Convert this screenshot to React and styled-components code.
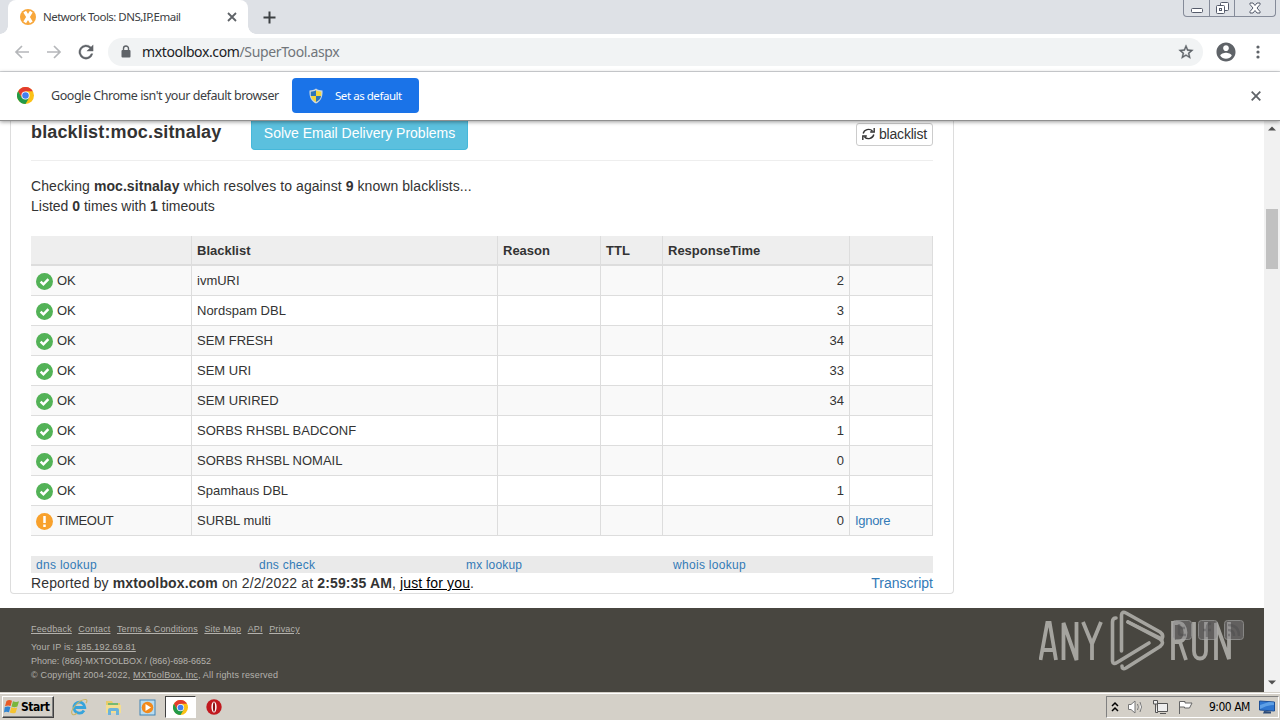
import React from "react";
import styled, { createGlobalStyle, css } from "styled-components";

const Global = createGlobalStyle`
  * { box-sizing: border-box; }
  body { margin: 0; overflow: hidden; background: #fff; }
  svg { display: block; flex: none; }
`;
const tahoma = `"DejaVu Sans Condensed", "DejaVu Sans", sans-serif`;
const ui = `"Noto Sans", "Open Sans", sans-serif`;
const arial = `"Liberation Sans", Arial, sans-serif`;

const Screen = styled.div`
  width: 1280px; height: 720px; display: flex; flex-direction: column;
  overflow: hidden; font-family: ${arial}; color: #333;
`;
const Text = styled.span`
  white-space: pre; letter-spacing: ${(p) => p.$ls || 0}px;
`;

/* browser chrome */
const TabStrip = styled.div`
  height: 34px; flex: none; background: #dee1e6; display: flex; justify-content: space-between; padding-left: 8px;
`;
const TabArea = styled.div`display: flex; align-items: center;`;
const Tab = styled.div`
  width: 240px; height: 34px; background: #fff; border-radius: 8px 8px 0 0; display: flex; align-items: center;
  padding: 0 11px 0 12px; font: 11.5px ${ui}; color: #3c4043; position: relative;
  &::before, &::after {
    content: ""; position: absolute; bottom: 0; width: 8px; height: 8px;
  }
  &::before { left: -8px; background: radial-gradient(circle at 0 0, transparent 7.5px, #fff 8px); }
  &::after { right: -8px; background: radial-gradient(circle at 100% 0, transparent 7.5px, #fff 8px); }
`;
const TabTitle = styled(Text)`flex: 1; padding: 0 0 1px 7px;`;
const NewTab = styled.div`padding-left: 15px;`;
const WindowButtons = styled.div`
  width: 93px; height: 17px; margin-right: 4px; display: flex; border: 1px solid #858b99; border-top: 0;
  border-radius: 0 0 4px 4px;
`;
const WindowButton = styled.div`
  width: ${(p) => p.$w}px; display: flex; align-items: center; justify-content: center;
  & + & { border-left: 1px solid #858b99; }
`;
const Toolbar = styled.div`
  height: 38px; flex: none; display: flex; align-items: center; border-bottom: 1px solid #d8dadd;
  padding: 0 12px 1px 14px;
`;
const NavIcons = styled.div`display: flex; gap: 16px; width: 94px;`;
const Address = styled.div`
  width: 1095px; height: 28px; border-radius: 14px; background: #f1f3f4; display: flex; align-items: center;
  padding: 0 9px 0 10px; font: 14px ${ui}; color: #70757a;
  b { font-weight: 400; color: #202124; }
`;
const Url = styled(Text)`flex: 1; padding: 0 0 2px 8px;`;
const ToolbarEnd = styled.div`display: flex; align-items: center; padding-left: 13px; gap: 20px;`;
const InfoBar = styled.div`
  height: 49px; flex: none; display: flex; align-items: center; padding: 0 19px 1px 17px; z-index: 2;
  background: #fff; border-bottom: 1px solid #8f8f8f; box-shadow: 0 1px 4px rgba(0,0,0,.4);
  font: 12.5px ${ui}; color: #3c4043;
`;
const InfoMessage = styled(Text)`width: 258px; padding-left: 17px;`;
const DefaultButton = styled.div`
  width: 127px; height: 35px; border-radius: 4px; background: #1a73e8; color: #fff; font-size: 11.5px;
  display: flex; align-items: center; padding-left: 16px; gap: 11px;
`;
const Spacer = styled.div`flex: 1;`;

/* page */
const Viewport = styled.div`height: 571px; flex: none; display: flex;`;
const Page = styled.div`width: 1264px; height: 571px; display: flex; flex-direction: column;`;
const Panel = styled.div`
  width: 944px; height: 473px; margin-left: 10px; padding: 0 20px; flex: none;
  border: 1px solid #ddd; border-top: 0; border-radius: 0 0 4px 4px;
`;
const PanelHead = styled.div`
  height: 40px; border-bottom: 1px solid #eee; display: flex; align-items: flex-start;
`;
const Heading = styled.div`
  width: 220px; font: bold 18px/22px ${arial}; white-space: pre; letter-spacing: ${(p) => p.$ls}px;
`;
const SolveButton = styled.div`
  width: 217px; height: 29px; background: #5bc0de; border: 1px solid #46b8da; border-top: 0;
  border-radius: 0 0 4px 4px; color: #fff; font-size: 14px; line-height: 24px; text-align: center;
`;
const RefreshButton = styled.div`
  width: 77px; height: 23px; margin-top: 2px; border: 1px solid #ccc; border-radius: 3px; display: flex;
  align-items: center; padding: 0 0 1px 5px; gap: 4px; font-size: 14px;
`;
const Summary = styled.div`
  height: 75px; padding-top: 15px; font-size: 14px; line-height: 20px; display: flex; flex-direction: column;
`;
const Table = styled.div`width: 902px; border-right: 1px solid #ddd;`;
const columns = css`display: grid; grid-template-columns: 160px 306px 103px 62px 187px 83px;`;
const HeadRow = styled.div`
  ${columns} height: 30px; background: #eee; border-bottom: 2px solid #ddd; font-size: 13px; font-weight: bold;
`;
const Row = styled.div`
  ${columns} height: 30px; border-bottom: 1px solid #ddd; background: ${(p) => (p.$odd ? "#f9f9f9" : "#fff")};
  font-size: 13px;
`;
const Cell = styled.div`
  display: flex; align-items: center; padding: 0 5px; justify-content: ${(p) => (p.$right ? "flex-end" : "flex-start")};
  & + & { border-left: 1px solid #ddd; }
`;
const StatusCell = styled(Cell)`gap: 4px; svg { margin-top: 1px; }`;
const Link = styled.a`color: #337ab7; white-space: pre; letter-spacing: ${(p) => p.$ls || 0}px;`;
const LookupBar = styled.div`
  height: 17px; margin-top: 20px; background: #eaeaea; display: grid; padding-left: 5px;
  grid-template-columns: 223px 207px 207px 1fr; font-size: 12px; line-height: 18px;
`;
const ReportLine = styled.div`
  display: flex; justify-content: space-between; font-size: 14px; line-height: 20px;
  u { color: #000; }
`;
const Footer = styled.div`
  height: 84px; margin-top: 14px; background: #484640; color: #b4b2ad; display: flex; justify-content: space-between;
  padding: 14px 20px 0 31px; font-size: 9px; line-height: 14px;
`;
const FooterInfo = styled.div`display: flex; flex-direction: column;`;
const FooterLinks = styled.div`display: flex; gap: 6.5px; margin-bottom: 4px; text-decoration: underline;`;
const Brand = styled.div`
  display: flex; align-items: flex-start; position: relative; height: 64px; margin-top: -14px; padding-right: 11px;
`;
const SocialIcons = styled.div`position: absolute; right: 0; top: 12px; display: flex; gap: 6px;`;
const ScrollBar = styled.div`
  width: 16px; background: #f1f1f1; display: flex; flex-direction: column; align-items: center; justify-content: space-between;
  padding: 5px 0 7px;
`;
const Thumb = styled.div`width: 12px; height: 60px; background: #c1c1c1; margin-bottom: 334px;`;

/* taskbar */
const TaskBar = styled.div`
  height: 28px; flex: none; background: #d4d0c8; border-top: 1px solid #d4d0c8; box-shadow: inset 0 1px 0 #fff;
  display: flex; align-items: center; padding: 1px 1px 0 2px; font-family: ${tahoma};
`;
const StartButton = styled.div`
  width: 52px; height: 22px; border: 1px solid; border-color: #fff #404040 #404040 #fff;
  box-shadow: inset -1px -1px 0 #808080; display: flex; align-items: center; padding-left: 1px; gap: 1px;
  font-size: 12px; font-weight: bold; color: #000;
`;
const QuickLaunch = styled.div`display: flex; align-items: center; margin-left: 8px;`;
const QuickIcon = styled.div`
  width: 34px; height: 22px; display: flex; justify-content: center; align-items: center;
`;
const ActiveTask = styled(QuickIcon)`
  width: 31px; margin: 0 1px; background: #fff; border: 1px solid; border-color: #404040 #fff #fff #404040;
`;
const Tray = styled.div`
  width: 173px; height: 22px; border: 1px solid; border-color: #808080 #fff #fff #808080; display: flex;
  align-items: center; padding-left: 4px; font-size: 12px; color: #000;
`;
const TrayIcons = styled.div`display: flex; align-items: center; gap: 8px; width: 98px;`;
const Clock = styled(Text)`width: 50px;`;

const Line = ({ w, h = w, d, sw = 2, c = "#5f6368" }) => (
  <svg width={w} height={h} viewBox={`0 0 ${w} ${h}`} fill="none" stroke={c} strokeWidth={sw}><path d={d} /></svg>
);
const Chrome = ({ s }) => (
  <svg width={s} height={s} viewBox="0 0 24 24">
    <circle cx="12" cy="12" r="12" fill="#fbc116" />
    <path d="M1.6 6A12 12 0 0 1 22.4 6H12L6.8 15Z" fill="#e33b2e" />
    <path d="M1.6 6A12 12 0 0 0 12 24L17.2 15L12 12L6.8 15Z" fill="#229a48" />
    <circle cx="12" cy="12" r="5.8" fill="#fff" /><circle cx="12" cy="12" r="4.6" fill="#4280ef" />
  </svg>
);
const MxIcon = () => (
  <svg width="16" height="16" viewBox="0 0 16 16">
    <circle cx="8" cy="8" r="8" fill="#f8a73b" /><path d="M4.7 2.7L11.3 13.3M11.3 2.7L4.7 13.3" stroke="#fff" strokeWidth="3.2" />
  </svg>
);
const Shield = () => (
  <svg width="16" height="16" viewBox="0 0 16 16">
    <path d="M8 .5C6 2 4 2.4 1.5 2.5C1 9 3.5 13.5 8 15.5C12.5 13.5 15 9 14.5 2.5C12 2.4 10 2 8 .5Z" fill="#ccd7df" />
    <path d="M8 2.3C6.2 3.3 4.8 3.6 2.8 3.7V8H8Z M8 8V14C11 12.6 12.6 10.8 13 8Z" fill="#2d75ba" />
    <path d="M8 2.3C9.8 3.3 11.2 3.6 13.2 3.7V8H8Z M8 8V14C5 12.6 3.4 10.8 3 8Z" fill="#f4d63c" />
  </svg>
);
const StatusIcon = ({ ok }) => (
  <svg width="17" height="17" viewBox="0 0 17 17" fill="none" stroke="#fff">
    <circle cx="8.5" cy="8.5" r="8.5" fill={ok ? "#53b257" : "#f8a12c"} stroke="none" />
    {ok ? <path d="M4.6 8.7L7.4 11.3L12.4 6.1" strokeWidth="2.5" />
      : <path d="M8.5 3V10M8.5 11.5V14" strokeWidth="2.5" />}
  </svg>
);
const Logo = () => (
  <svg width="194" height="64" viewBox="0 0 194 64" fill="none" stroke="#a5a49f" strokeWidth="3.8">
    <path d="M1.5 52L8.3 15H10.7L17 52M4 42H15M24.5 52V15L37.5 52V14M44 14L53 36L62 14M53 35V52" />
    <g strokeWidth="3.6" strokeLinecap="round" strokeLinejoin="round">
      <path d="M77 10Q73.500 10 73.500 14V53Q74 57 78 54.500L110 35" />
      <path d="M82.500 43V7Q83 3 87 5L121 24Q125 27 123 31L89 14" />
      <path d="M89 14L121 31Q126 34.500 121 38.500L87 60Q83 62 83 58" />
    </g>
    <path d="M134 52V15H139C149 15 149 34 139 34H134M141 34L147 52M155 14V43C155 53 167 53 167 43V14M177 52V15L190 51V14" />
  </svg>
);
const Social = ({ d }) => (
  <svg width="20" height="20" viewBox="0 0 20 20" opacity=".65">
    <rect x=".5" y=".5" width="19" height="19" rx="3" fill="#85848a" fillOpacity=".65" stroke="#aaa" />
    <path d={d} fill="none" stroke="#605f62" strokeWidth="2.5" />
  </svg>
);
const WinFlag = () => (
  <svg width="16" height="16" viewBox="0 0 16 16">
    <path d="M2.5 2Q5 0 8 1.7L6.6 7Q4 5.8 1 7.3Z" fill="#e85b27" /><path d="M9 2.2Q12 3.8 15 2.2L13.4 7.5Q10.5 8.8 7.5 7.4Z" fill="#79b63c" />
    <path d="M.7 8.2Q3.8 6.7 6.4 8L5 13.3Q2 12 0 13.4Z" fill="#3185d2" /><path d="M7.3 8.3Q10.5 9.7 13.2 8.4L11.6 13.8Q8.8 15 5.8 13.5Z" fill="#f5c331" />
  </svg>
);
const IE = () => (
  <svg width="18" height="18" viewBox="0 0 18 18" fill="none">
    <path d="M14 12.5A5.5 5.5 0 1 1 14.8 9.5H5" stroke="#36a4dc" strokeWidth="2.8" />
    <path d="M2.5 16.5C-1 13 9 1 16 1.500C17.5 2 17 4 16 5M2.5 16.5C4 17 6 16 7 15" stroke="#c9b565" strokeWidth="1.1" />
  </svg>
);
const Folder = () => (
  <svg width="17" height="17" viewBox="0 0 17 17">
    <path d="M1 2H7L8 4H15V14H1Z" fill="#e8cc6a" /><path d="M3 4H13V6H3Z" fill="#75b972" />
    <path d="M1 6H16V14H1Z" fill="#f4de91" /><path d="M3 16V11Q3 9 5 9H12Q14 9 14 11V16H11V12H6V16Z" fill="#6cb3da" />
  </svg>
);
const Media = () => (
  <svg width="17" height="17" viewBox="0 0 17 17">
    <rect x="1" y="1" width="15" height="15" fill="#b9dcf0" stroke="#4184b5" /><circle cx="8.5" cy="8.5" r="5.8" fill="#f28a1c" /><path d="M6.5 5V12L12 8.5Z" fill="#fff" />
  </svg>
);
const Opera = () => (
  <svg width="16" height="16" viewBox="0 0 16 16">
    <circle cx="8" cy="8" r="7.7" fill="#c1191f" /><ellipse cx="8" cy="8" rx="2.6" ry="5.6" fill="#fff" /><ellipse cx="8" cy="8" rx="1.1" ry="4.8" fill="#8b1115" />
  </svg>
);
const Desktop = () => (
  <svg width="16" height="14" viewBox="0 0 16 14">
    <path d="M.5 1L15.5 2V11L.5 10Z" fill="#2f76cf" stroke="#1d4f96" /><path d="M1 5L10 2L15 2.5V5Q8 5 1 9Z" fill="#5ea0e6" />
    <path d="M5 11L12 11.5V13.5H4Z" fill="#2b4a77" />
  </svg>
);

const rows = [
  ["ivmURI", 2], ["Nordspam DBL", 3], ["SEM FRESH", 34], ["SEM URI", 33], ["SEM URIRED", 34],
  ["SORBS RHSBL BADCONF", 1], ["SORBS RHSBL NOMAIL", 0], ["Spamhaus DBL", 1], ["SURBL multi", 0],
];

export default function App() {
  return (
    <Screen>
      <Global />
      <TabStrip>
        <TabArea>
          <Tab>
            <MxIcon /><TabTitle $ls={-0.53}>Network Tools: DNS,IP,Email</TabTitle>
            <Line w={10} d="M1 1L9 9M9 1L1 9" sw={1.8} />
          </Tab>
          <NewTab><Line w={13} d="M6.5 .5V12.5M.5 6.5H12.5" c="#3c4043" /></NewTab>
        </TabArea>
        <WindowButtons>
          <WindowButton $w={25}><svg width="12" height="12" fill="#fff" stroke="#555b6b"><rect x=".5" y="6.5" width="11" height="4" rx="1" /></svg></WindowButton>
          <WindowButton $w={25}><svg width="13" height="14" fill="#fff" stroke="#555b6b"><rect x="4.5" y="1.5" width="8" height="8" rx="1" /><rect x=".5" y="4.5" width="8" height="8" rx="1" /><rect x="3.5" y="7.5" width="2" height="2" /></svg></WindowButton>
          <WindowButton $w={41}><svg width="12" height="12" fill="#fff" stroke="#555b6b"><path d="M1 1H4L6 3.5L8 1H11V2.5L8 6L11 9.5V11H8L6 8.5L4 11H1V9.5L4 6L1 2.5Z" /></svg></WindowButton>
        </WindowButtons>
      </TabStrip>
      <Toolbar>
        <NavIcons>
          <Line w={16} d="M15 8H2M8 2L2 8L8 14" sw={1.7} c="#b5b7ba" />
          <Line w={16} d="M1 8H14M8 2L14 8L8 14" sw={1.7} c="#b5b7ba" />
          <svg width="16" height="16" viewBox="3 3 18 18" fill="#5f6368" stroke="#5f6368" strokeWidth=".4"><path d="M17.650 6.350A8 8 0 1 0 19.730 14H17.650A6 6 0 1 1 16.240 7.760L13 11H20V4Z" /></svg>
        </NavIcons>
        <Address>
          <svg width="16" height="16" viewBox="0 0 16 16"><rect x="3.5" y="6" width="9" height="7.5" rx="1" fill="#5f6368" /><path d="M5.5 7V4.5A2.5 2.5 0 0 1 10.5 4.5V7" fill="none" stroke="#5f6368" strokeWidth="1.4" /></svg>
          <Url $ls={-0.37}><b>mxtoolbox.com</b>/SuperTool.aspx</Url>
          <svg width="16" height="16" viewBox="1 1 22 22" fill="#5f6368" stroke="#5f6368" strokeWidth=".5"><path d="M22 9.240l-7.190-.62L12 2 9.190 8.630 2 9.240l5.460 4.730L5.820 21 12 17.270 18.180 21l-1.630-7.030L22 9.240zM12 15.400l-3.760 2.270 1-4.280-3.320-2.880 4.380-.38L12 6.100l1.710 4.040 4.380.38-3.320 2.880 1 4.280L12 15.400z" /></svg>
        </Address>
        <ToolbarEnd>
          <svg width="20" height="20" viewBox="1.5 1.5 21 21" fill="#5f6368"><path d="M12 2C6.480 2 2 6.480 2 12s4.480 10 10 10 10-4.480 10-10S17.520 2 12 2zm0 3c1.660 0 3 1.340 3 3s-1.340 3-3 3-3-1.340-3-3 1.340-3 3-3zm0 14.200c-2.500 0-4.710-1.280-6-3.220.03-1.990 4-3.080 6-3.080 1.990 0 5.970 1.090 6 3.080-1.290 1.940-3.500 3.220-6 3.220z" /></svg>
          <svg width="4" height="16" fill="#5f6368"><circle cx="2" cy="3" r="1.6" /><circle cx="2" cy="8" r="1.6" /><circle cx="2" cy="13" r="1.6" /></svg>
        </ToolbarEnd>
      </Toolbar>
      <InfoBar>
        <Chrome s={17} />
        <InfoMessage $ls={-0.45}>Google Chrome isn't your default browser</InfoMessage>
        <DefaultButton><Shield /><Text $ls={-0.45}>Set as default</Text></DefaultButton>
        <Spacer />
        <Line w={10} d="M.7 .7L9.3 9.3M9.3 .7L.7 9.3" sw={1.8} />
      </InfoBar>
      <Viewport>
        <Page>
          <Panel>
            <PanelHead>
              <Heading $ls={0.15}>blacklist:moc.sitnalay</Heading>
              <SolveButton><Text>Solve Email Delivery Problems</Text></SolveButton>
              <Spacer />
              <RefreshButton>
                <Line w={13} h={14} d="M1.2 6.5A5.4 5 0 0 1 10.5 4M11.8 7.5A5.4 5 0 0 1 2.5 10M12.2 1V5H8.2M.8 13V9H4.8" sw={1.4} c="#333" />
                <Text $ls={-0.2}>blacklist</Text>
              </RefreshButton>
            </PanelHead>
            <Summary>
              <Text $ls={0.07}>Checking <b>moc.sitnalay</b> which resolves to against <b>9</b> known blacklists...</Text>
              <Text>Listed <b>0</b> times with <b>1</b> timeouts</Text>
            </Summary>
            <Table>
              <HeadRow>
                {["", "Blacklist", "Reason", "TTL", "ResponseTime", ""].map((t, i) => <Cell key={i}><Text>{t}</Text></Cell>)}
              </HeadRow>
              {rows.map(([name, time], i) => (
                <Row key={name} $odd={i % 2 === 0}>
                  <StatusCell><StatusIcon ok={i < 8} /><Text $ls={i < 8 ? 0 : -0.3}>{i < 8 ? "OK" : "TIMEOUT"}</Text></StatusCell>
                  <Cell><Text>{name}</Text></Cell><Cell /><Cell /><Cell $right>{time}</Cell>
                  <Cell>{i === 8 && <Link $ls={-0.3}>Ignore</Link>}</Cell>
                </Row>
              ))}
            </Table>
            <LookupBar>
              <Link $ls={0.3}>dns lookup</Link><Link $ls={0.25}>dns check</Link><Link $ls={0.15}>mx lookup</Link><Link $ls={0.3}>whois lookup</Link>
            </LookupBar>
            <ReportLine>
              <Text $ls={0.13}>Reported by <b>mxtoolbox.com</b> on 2/2/2022 at <b>2:59:35 AM</b>, <u>just for you</u>.</Text>
              <Link>Transcript</Link>
            </ReportLine>
          </Panel>
          <Footer>
            <FooterInfo>
              <FooterLinks>
                {["Feedback", "Contact", "Terms & Conditions", "Site Map", "API", "Privacy"].map((t) => <Text key={t} $ls={0.16}>{t}</Text>)}
              </FooterLinks>
              <Text $ls={0.17}>Your IP is: <u>185.192.69.81</u></Text>
              <Text $ls={-0.04}>Phone: (866)-MXTOOLBOX / (866)-698-6652</Text>
              <Text $ls={0.17}>© Copyright 2004-2022, <u>MXToolBox, Inc</u>, All rights reserved</Text>
            </FooterInfo>
            <Brand>
              <Logo />
              <SocialIcons>
                <Social d="M7 4V13Q7 15 10 15H14M7 8H13" /><Social d="M13 4Q9 3 9 8V17M5 10H13" /><Social d="M4 5Q15 5 15 16M4 10Q10 10 10 16M4 15H6" />
              </SocialIcons>
            </Brand>
          </Footer>
        </Page>
        <ScrollBar>
          <svg width="8" height="5" fill="#505050"><path d="M0 4.5L4 .5L8 4.5Z" /></svg>
          <Thumb />
          <svg width="8" height="5" fill="#505050"><path d="M0 .5L4 4.5L8 .5Z" /></svg>
        </ScrollBar>
      </Viewport>
      <TaskBar>
        <StartButton><WinFlag /><Text $ls={-0.45}>Start</Text></StartButton>
        <QuickLaunch>
          <QuickIcon><IE /></QuickIcon>
          <QuickIcon><Folder /></QuickIcon>
          <QuickIcon><Media /></QuickIcon>
          <ActiveTask><Chrome s={15} /></ActiveTask>
          <QuickIcon><Opera /></QuickIcon>
        </QuickLaunch>
        <Spacer />
        <Tray>
          <TrayIcons>
            <Line w={8} h={12} d="M1 5L4 2L7 5M1 10L4 7L7 10" sw={1.5} c="#000" />
            <svg width="17" height="16" fill="#fff" stroke="#777"><path d="M1.5 5.5H4L8 2V14L4 10.5H1.5ZM10.5 5Q12 8 10.5 11M13 3Q16 8 13 13" /></svg>
            <svg width="17" height="16" fill="#eee" stroke="#555"><path d="M5.5 4.5H15.5V12.5H5.5ZM8 14.5H14M1.5 1.5V5H5.5V1.5ZM3.5 5V13.5H6" /></svg>
            <svg width="17" height="16" fill="#fff" stroke="#666"><path d="M2.5 15V2.5H8V4H15L12.5 9H7.5V8H2.5" /></svg>
          </TrayIcons>
          <Clock $ls={-0.5}>9:00 AM</Clock>
          <Desktop />
        </Tray>
      </TaskBar>
    </Screen>
  );
}
